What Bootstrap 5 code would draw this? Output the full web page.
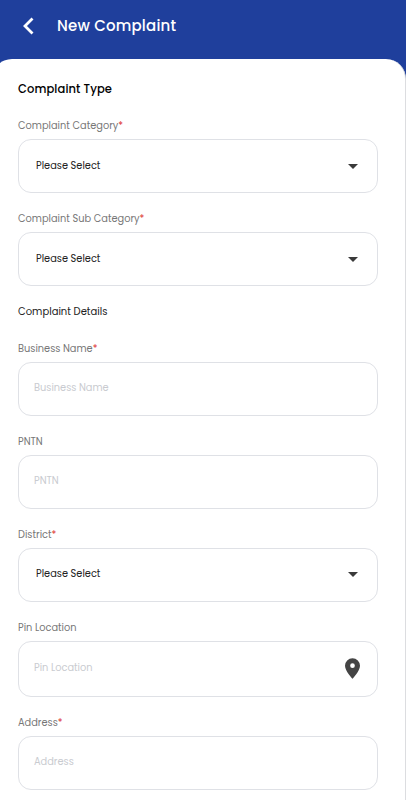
<!DOCTYPE html>
<html lang="en">
<head>
<meta charset="utf-8">
<meta name="viewport" content="width=device-width, initial-scale=1">
<link href="https://cdn.jsdelivr.net/npm/bootstrap@5.3.0/dist/css/bootstrap.min.css" rel="stylesheet">
<style>
html,body{height:800px;overflow:hidden;}
body{background:#1f3f9c;font-family:Poppins,"Open Sans","Noto Sans",sans-serif;}
.app-head{height:59px;padding:0 0 7px 22px;color:#fff;gap:22px;}
.app-title{font-size:15px;font-weight:500;letter-spacing:.2px;}
.sheet{background:#fff;border-right:1px solid #dcdde0;border-radius:20px 20px 0 0;margin-left:-8px;padding:21px 27px 0 26px;height:741px;overflow:hidden;}
.sec-title{font-size:11.5px;font-weight:500;line-height:18px;color:#000;margin-bottom:20px;letter-spacing:.1px;}
.sec-sub{font-size:10px;font-weight:400;line-height:15px;color:#222;margin-bottom:21.5px;}
.fld{margin-bottom:18px;}
.fld-label{font-size:9.8px;color:#777;margin-bottom:6px;line-height:15px;}
.req{color:#d33;}
.fld-box{height:54px;border:1px solid #dfe1e6;border-radius:13px;padding:0 19.500px 0 17px;font-size:9.8px;color:#222;}
.fld-in{padding-left:15px;color:#c9cbd0;}
.fld-tall{height:56px;padding-right:17px;}
.caret-d{width:0;height:0;border-left:5.5px solid transparent;border-right:5.5px solid transparent;border-top:5.5px solid #3a3a3a;}
</style>
</head>
<body>
<div class="app-head d-flex align-items-center">
<svg width="13" height="18" viewBox="0 0 13 18"><path d="M10.500 1.500 3 9l7.500 7.500" fill="none" stroke="#fff" stroke-width="2.800"/></svg>
<span class="app-title">New Complaint</span>
</div>
<div class="sheet">
<div class="sec-title">Complaint Type</div>
<div class="fld"><div class="fld-label">Complaint Category<span class="req">*</span></div>
<div class="fld-box d-flex align-items-center justify-content-between"><span>Please Select</span><span class="caret-d"></span></div></div>
<div class="fld"><div class="fld-label">Complaint Sub Category<span class="req">*</span></div>
<div class="fld-box d-flex align-items-center justify-content-between"><span>Please Select</span><span class="caret-d"></span></div></div>
<div class="sec-sub">Complaint Details</div>
<div class="fld"><div class="fld-label">Business Name<span class="req">*</span></div>
<div class="fld-box fld-in d-flex align-items-center">Business Name</div></div>
<div class="fld"><div class="fld-label">PNTN</div>
<div class="fld-box fld-in d-flex align-items-center">PNTN</div></div>
<div class="fld"><div class="fld-label">District<span class="req">*</span></div>
<div class="fld-box d-flex align-items-center justify-content-between"><span>Please Select</span><span class="caret-d"></span></div></div>
<div class="fld"><div class="fld-label">Pin Location</div>
<div class="fld-box fld-in fld-tall d-flex align-items-center justify-content-between"><span>Pin Location</span>
<svg width="15" height="21" viewBox="0 0 16 22"><path fill="#444" fill-rule="evenodd" d="M8 0a8 8 0 0 0-8 8c0 5.500 8 14 8 14s8-8.500 8-14a8 8 0 0 0-8-8Zm0 5.500a2.500 2.500 0 1 1 0 5 2.500 2.500 0 0 1 0-5Z"/></svg></div></div>
<div class="fld"><div class="fld-label">Address<span class="req">*</span></div>
<div class="fld-box fld-in d-flex align-items-center">Address</div></div>
</div>
</body>
</html>
